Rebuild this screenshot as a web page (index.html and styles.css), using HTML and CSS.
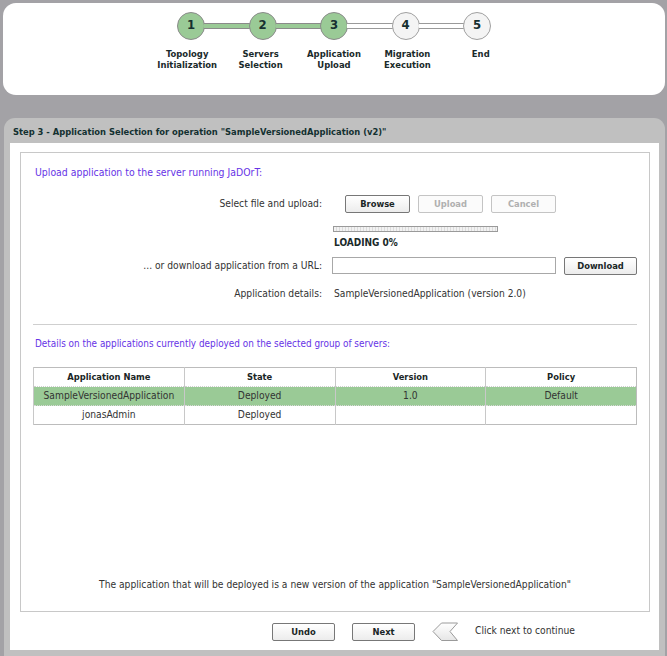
FILE: index.html
```html
<!DOCTYPE html>
<html>
<head>
<meta charset="utf-8">
<link rel="stylesheet" href="styles.css">
</head>
<body>
<div class="top-card">
  <div class="stepper">
    <div class="circles">
      <div class="circle done">1</div><div class="link done"></div>
      <div class="circle done">2</div><div class="link done"></div>
      <div class="circle done">3</div><div class="link"></div>
      <div class="circle">4</div><div class="link"></div>
      <div class="circle">5</div>
    </div>
    <div class="labels">
      <div class="label">Topology<br>Initialization</div>
      <div class="label">Servers<br>Selection</div>
      <div class="label">Application<br>Upload</div>
      <div class="label">Migration<br>Execution</div>
      <div class="label">End</div>
    </div>
  </div>
</div>

<div class="panel">
  <div class="panel-head">Step 3 - Application Selection for operation "SampleVersionedApplication (v2)"</div>
  <div class="panel-body">
    <div class="white">
      <div class="box">
        <div class="heading h1">Upload application to the server running JaDOrT:</div>
        <div class="form">
          <div class="row r1">
            <div class="lbl">Select file and upload:</div>
            <div class="val btns">
              <span class="btn">Browse</span>
              <span class="btn disabled">Upload</span>
              <span class="btn disabled">Cancel</span>
            </div>
          </div>
          <div class="row r2">
            <div class="lbl"></div>
            <div class="val"><div class="progress"></div></div>
          </div>
          <div class="row r3">
            <div class="lbl"></div>
            <div class="val loading">LOADING 0%</div>
          </div>
          <div class="row r4">
            <div class="lbl">... or download application from a URL:</div>
            <div class="val urlrow">
              <span class="input"></span>
              <span class="btn dl">Download</span>
            </div>
          </div>
          <div class="row r5">
            <div class="lbl">Application details:</div>
            <div class="val details">SampleVersionedApplication (version 2.0)</div>
          </div>
        </div>
        <div class="sep"></div>
        <div class="heading h2">Details on the applications currently deployed on the selected group of servers:</div>
        <table class="apps">
          <thead>
            <tr><th>Application Name</th><th>State</th><th>Version</th><th>Policy</th></tr>
          </thead>
          <tbody>
            <tr class="sel"><td>SampleVersionedApplication</td><td>Deployed</td><td>1.0</td><td>Default</td></tr>
            <tr><td>jonasAdmin</td><td>Deployed</td><td></td><td></td></tr>
          </tbody>
        </table>
        <div class="note">The application that will be deployed is a new version of the application "SampleVersionedApplication"</div>
      </div>
      <div class="actions">
        <span class="btn act">Undo</span>
        <span class="btn act">Next</span>
        <svg class="arrow" width="27" height="20" viewBox="0 0 27 20">
          <defs>
            <linearGradient id="ag" x1="0" y1="0" x2="0" y2="1">
              <stop offset="0" stop-color="#ffffff"/>
              <stop offset="1" stop-color="#e6e6e6"/>
            </linearGradient>
          </defs>
          <path d="M1 9.5 L9.5 1 H25.5 L18 9.5 L25.5 18.5 H9.5 Z" fill="url(#ag)" stroke="#9a9a9a" stroke-width="1"/>
        </svg>
        <span class="hint">Click next to continue</span>
      </div>
    </div>
  </div>
</div>
</body>
</html>
```

FILE: styles.css
```css
html, body {
  margin: 0;
  padding: 0;
}
body {
  background: #a3a2a6;
  font-family: "DejaVu Sans Condensed", "DejaVu Sans", sans-serif;
  font-size: 10.2px;
  color: #333333;
  width: 667px;
  height: 656px;
  overflow: hidden;
}

/* Top card with stepper */
.top-card {
  margin: 3px 2px 0 3px;
  height: 92px;
  background: #ffffff;
  border-radius: 13px;
  box-sizing: border-box;
  padding-top: 9px;
}
.stepper {
  width: 367px;
  margin: 0 auto;
  display: flex;
  flex-direction: column;
  align-items: center;
}
.circles {
  display: flex;
  align-items: center;
  height: 28px;
}
.circle {
  width: 28px;
  height: 28px;
  box-sizing: border-box;
  border-radius: 50%;
  border: 1px solid #a0a0a0;
  background: #f4f4f4;
  display: flex;
  align-items: center;
  justify-content: center;
  font-weight: bold;
  font-size: 13px;
  color: #163030;
  padding-bottom: 3px;
}
.circle.done {
  background: #9aca96;
  border-color: #8a8a8a;
}
.link {
  width: 45.5px;
  height: 6px;
  box-sizing: border-box;
  border-top: 1px solid #9a9a9a;
  border-bottom: 1px solid #9a9a9a;
  background: #ffffff;
  margin: 0 -1px;
}
.link.done {
  background: #9aca96;
  border-color: #8a8a8a;
}
.labels {
  margin-top: 8px;
  display: grid;
  grid-template-columns: repeat(5, 73.4px);
  text-align: center;
  font-weight: bold;
  font-size: 9.4px;
  line-height: 11px;
  color: #1a2a2a;
}

/* Panel */
.panel {
  margin: 23px 2px 0 4px;
}
.panel-head {
  height: 25px;
  background: #c0c0c0;
  border-radius: 11px 11px 0 0;
  padding-left: 9px;
  padding-top: 1px;
  display: flex;
  align-items: center;
  font-weight: bold;
  font-size: 9.3px;
  color: #133030;
  box-sizing: border-box;
}
.panel-body {
  background: #c0c0c0;
  padding: 0 6px 6px 6px;
}
.white {
  background: #ffffff;
  height: 507px;
  box-sizing: border-box;
  padding: 9px 9px 0 10px;
}
.box {
  height: 460px;
  box-sizing: border-box;
  border: 1px solid #c8c8c8;
  padding: 0 12px;
  display: flex;
  flex-direction: column;
}
.heading {
  color: #6633e6;
  line-height: 12px;
  margin-top: 13px;
  padding-left: 2px;
}
.h1 {
  font-size: 10.4px;
}
.h2 {
  margin-top: 13px;
  font-size: 9.9px;
}
.form {
  margin-top: 17px;
  margin-left: -12px;
}
.row {
  display: flex;
  align-items: center;
}
.lbl {
  width: 301px;
  flex: none;
  text-align: right;
  line-height: 12px;
}
.val {
  margin-left: 10px;
  line-height: 12px;
}
.r1 { height: 18px; }
.r2 { margin-top: 13px; height: 6px; }
.r3 { margin-top: 5px; }
.r4 { margin-top: 8px; height: 17px; }
.r5 { margin-top: 14px; }

.btns {
  display: flex;
  gap: 8px;
  margin-left: 23px;
}
.btn {
  display: inline-flex;
  align-items: center;
  justify-content: center;
  width: 65px;
  height: 18px;
  box-sizing: border-box;
  border: 1px solid #777777;
  border-radius: 2px;
  background: linear-gradient(#ffffff, #ececec);
  font-weight: bold;
  font-size: 9.3px;
  color: #1a2626;
}
.btn.disabled {
  border-color: #c4c4c4;
  color: #b0b0b0;
  background: #fbfbfb;
}
.progress {
  margin-left: 1px;
  width: 165px;
  height: 6px;
  box-sizing: border-box;
  border: 1px solid #9a9a9a;
  background: repeating-linear-gradient(90deg, #f2f2f2 0 2px, #dcdcdc 2px 3px);
}
.loading {
  font-weight: bold;
  font-size: 10px;
  color: #1a2a2a;
  padding-left: 2px;
}
.urlrow {
  display: flex;
  gap: 8px;
}
.input {
  display: block;
  width: 224px;
  height: 17px;
  box-sizing: border-box;
  border: 1px solid #a8a8a8;
  background: #ffffff;
}
.btn.dl {
  width: 73px;
  height: 18px;
}
.details {
  padding-left: 2px;
}
.sep {
  margin-top: 24px;
  height: 1px;
  background: #cfcfcf;
}

.apps {
  margin-top: 17px;
  width: 604px;
  border-collapse: collapse;
  table-layout: fixed;
  border: 1px solid #bcbcbc;
}
.apps th, .apps td {
  border-left: 1px solid #c8c8c8;
  text-align: center;
  padding: 0;
  line-height: 12px;
}
.apps th {
  height: 18px;
  font-weight: bold;
  font-size: 9.3px;
  color: #1a2626;
  border-bottom: 1px dotted #d0d0d0;
}
.apps td {
  height: 18px;
}
.apps tr.sel td {
  background: #9aca96;
}
.apps tbody tr + tr td {
  border-top: 1px dotted #d8d8d8;
}

.note {
  margin-top: auto;
  margin-bottom: 20px;
  text-align: center;
  line-height: 12px;
}

.actions {
  display: flex;
  align-items: center;
  height: 38px;
  padding-left: 252px;
  padding-top: 1px;
  box-sizing: border-box;
}
.btn.act {
  width: 63px;
  height: 18px;
  margin-right: 17px;
}
.arrow {
  display: block;
  margin-right: 16px;
}
.hint {
  color: #333333;
  margin-top: -3px;
}
```
